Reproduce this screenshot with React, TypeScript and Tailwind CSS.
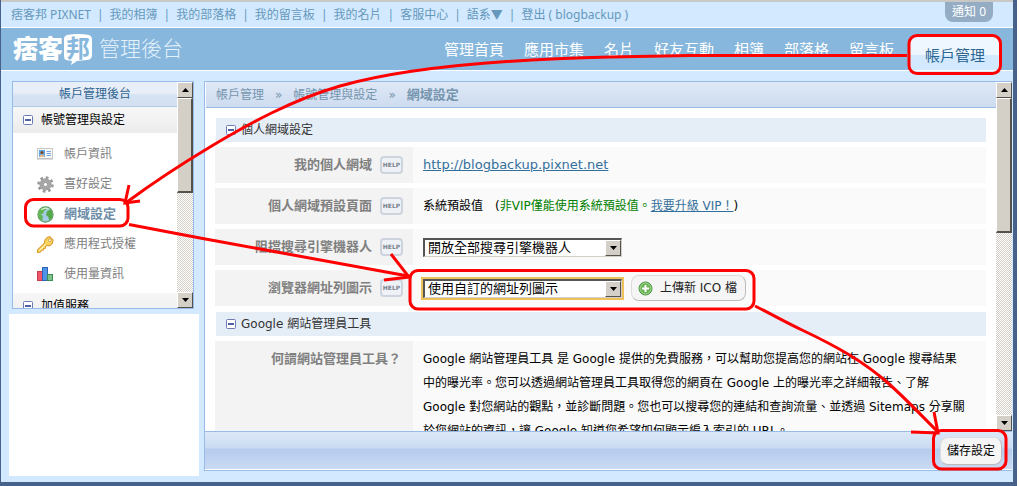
import type { ReactNode } from 'react';

const TOP_LINKS = ['痞客邦 PIXNET', '我的相簿', '我的部落格', '我的留言板', '我的名片', '客服中心', '語系▼', '登出 ( blogbackup )'];

const NAV_LINKS = ['管理首頁', '應用市集', '名片', '好友互動', '相簿', '部落格', '留言板'];

const CardIcon = () => (
  <svg width="16" height="16" viewBox="0 0 16 16" aria-hidden="true">
    <rect x="0.5" y="2.5" width="15" height="10" fill="#f7f7f7" stroke="#c9c9c9" />
    <rect x="2" y="4" width="6" height="7" fill="#5fa8ea" />
    <circle cx="5" cy="6.5" r="1.6" fill="#7c4b20" />
    <path d="M2.5 11a2.5 2.5 0 0 1 5 0z" fill="#e9b98a" />
    <path d="M9.5 5.5h4.5M9.5 7.5h4.5M9.5 9.5h4.5" stroke="#79a9dc" />
    <path d="M0 13h16" stroke="#b9b9b9" />
  </svg>
);

const GearIcon = () => (
  <svg width="17" height="17" viewBox="0 0 16 16" aria-hidden="true">
    <circle cx="8" cy="8" r="6.4" fill="none" stroke="#9a9a9a" strokeWidth="2.8" strokeDasharray="2.5 2.53" />
    <circle cx="8" cy="8" r="4.2" fill="#dcdcdc" stroke="#a4a4a4" strokeWidth="3.2" />
    <circle cx="8" cy="8" r="2" fill="#fff" stroke="#777" strokeWidth="0.8" />
  </svg>
);

const GlobeIcon = () => (
  <svg width="17" height="17" viewBox="0 0 16 16" aria-hidden="true">
    <circle cx="8" cy="8" r="7.2" fill="#a3cbe6" stroke="#5d9b62" />
    <path d="M2 4.5C4 1.5 7 .9 9.5 1.3L8.500 3.500 6.500 4.500 6 7 3.500 7.500 5.500 9.500 5 14C2 12.500.8 9 1.200 6.500z" fill="#62b551" />
    <path d="M10 4.500l3-1.500c2 2.500 2.300 6 .8 8.500l-2.300 2-1-3.500-2-1.500.5-2.500z" fill="#56a948" />
    <path d="M4 3.500C6 2 9 1.700 11 2.700" fill="none" stroke="#d9f2cf" />
  </svg>
);

const KeyIcon = () => (
  <svg width="17" height="17" viewBox="0 0 16 16" aria-hidden="true">
    <path
      d="M9.500 1.500l2.500-.9 3.200 3.200-.9 3.200-2.600 2.300-2.400-.5-1.300 1.200-.2 1.500-1.500.2-.3 1.500-1.700.3-1.500 1.800-2.200.1-.1-2.300L7 6.800l.4-2.800z"
      fill="#f9d75e"
      stroke="#dc9a2b"
    />
    <path d="M2 14l6-6" stroke="#fff3b8" />
    <circle cx="12" cy="4" r="1.300" fill="#fff" stroke="#c98724" strokeWidth="0.700" />
  </svg>
);

const ChartIcon = () => (
  <svg width="17" height="16" viewBox="0 0 17 16" aria-hidden="true">
    <rect x="0.5" y="5.500" width="5" height="9" fill="#f0566a" stroke="#c23a4e" />
    <rect x="5.500" y="1.500" width="5" height="13" fill="#4f93e6" stroke="#2c62b8" />
    <rect x="10.500" y="8.500" width="5" height="6" fill="#7cc489" stroke="#3d8d55" />
  </svg>
);

const MENU = [
  { label: '帳戶資訊', icon: <CardIcon /> },
  { label: '喜好設定', icon: <GearIcon /> },
  { label: '網域設定', icon: <GlobeIcon />, active: true },
  { label: '應用程式授權', icon: <KeyIcon /> },
  { label: '使用量資訊', icon: <ChartIcon /> },
];

const Toggle = () => (
  <svg width="10" height="10" viewBox="0 0 10 10" aria-hidden="true">
    <rect x="0.5" y="0.5" width="9" height="9" rx="1" fill="#fff" stroke="#6c7ab5" />
    <rect x="2" y="4" width="6" height="2" fill="#5161a5" />
  </svg>
);

const BEVEL = 'border border-t-[#fff] border-l-[#fff] border-r-[#55524d] border-b-[#55524d] bg-[#d4d0c8]';

function ArrowBox({ up = false }: { up?: boolean }) {
  return (
    <span className={`flex h-4 w-4 shrink-0 items-center justify-center ${BEVEL}`}>
      <svg width="7" height="4" viewBox="0 0 7 4" aria-hidden="true">
        <path d={up ? 'M3.500 0L7 4H0z' : 'M0 0h7L3.500 4z'} fill="#000" />
      </svg>
    </span>
  );
}

function Scrollbar({ thumb }: { thumb: string }) {
  return (
    <div
      aria-hidden="true"
      className="flex w-4 shrink-0 flex-col bg-[repeating-conic-gradient(#d4d0c8_0_25%,#ffffff_0_50%)] bg-[length:2px_2px]"
    >
      <ArrowBox up />
      <div className={`${thumb} border-r-2 border-b-2 ${BEVEL}`} />
      <div className="flex-1" />
      <ArrowBox />
    </div>
  );
}

function Select({ id, value, focused = false }: { id: string; value: string; focused?: boolean }) {
  return (
    <div
      className={`relative h-[19px] w-[199px] border border-t-2 border-l-2 border-[#d4d0c8] border-t-[#555] border-l-[#555] bg-white ${
        focused ? 'outline-2 outline-[#edc15c]' : ''
      }`}
    >
      <select id={id} className="block h-4 w-full appearance-none bg-white pr-4 pl-[3px] text-[13px] leading-4 text-black outline-none">
        <option>{value}</option>
      </select>
      <span className="pointer-events-none absolute top-0 right-0">
        <ArrowBox />
      </span>
    </div>
  );
}

function SectionTitle({ children }: { children: ReactNode }) {
  return (
    <h2 className="ml-px flex h-6 items-center gap-[5px] bg-[#e5edf7] pl-2.5 text-xs text-[#333]">
      <Toggle />
      {children}
    </h2>
  );
}

function HelpButton() {
  return (
    <button
      type="button"
      className="flex h-[18px] w-[23px] shrink-0 items-center justify-center rounded border-2 border-[#cdd4dd] bg-[#eef2f7] text-[6px] leading-none font-bold text-[#7b828c]"
    >
      HELP
    </button>
  );
}

function Row({ label, htmlFor, children }: { label: string; htmlFor?: string; children: ReactNode }) {
  return (
    <div className="flex h-9 text-xs">
      <div className="flex w-[198px] shrink-0 items-center justify-end gap-2 bg-[#f3f3f3] pr-2.5">
        <label htmlFor={htmlFor} className="text-[13px] font-bold text-[#808080]">
          {label}
        </label>
        <HelpButton />
      </div>
      <div className="flex flex-1 items-center bg-[#fafafa] pl-2.5 whitespace-nowrap text-black">{children}</div>
    </div>
  );
}

function Sidebar() {
  return (
    <aside className="flex w-[190px] shrink-0 flex-col gap-[5px]">
      <div className="mr-[5px] ml-[3px] flex h-[228px] shrink-0 overflow-hidden border border-[#99bbe8] bg-white">
        <div className="min-w-0 flex-1 text-xs">
          <h2 className="h-[25px] border-b border-[#a9cbe8] bg-[linear-gradient(#e9eff9_0_45%,#d5e3f3_55%,#d2e0f2)] text-center leading-6 text-[#2f6490]">
            帳戶管理後台
          </h2>
          <h3 className="flex h-[26px] items-center gap-2 bg-linear-to-b from-[#f7f7f7] to-[#ececec] pl-2.5 text-black">
            <Toggle />
            帳號管理與設定
          </h3>
          <ul className="pt-1.5 pb-1">
            {MENU.map((item) => (
              <li key={item.label}>
                <a href="#" className="flex h-[30px] items-center pl-6">
                  <span className="w-[27px]">{item.icon}</span>
                  <span className={item.active ? 'text-[13px] font-bold text-[#6f8fa8]' : 'text-[#808080]'}>{item.label}</span>
                </a>
              </li>
            ))}
          </ul>
          <h3 className="flex h-[26px] items-center gap-2 bg-linear-to-b from-[#f7f7f7] to-[#ececec] pl-2.5 text-black">
            <Toggle />
            加值服務
          </h3>
        </div>
        <Scrollbar thumb="h-[95px]" />
      </div>
      <div className="flex-1 bg-white" />
    </aside>
  );
}

function SettingsPanel() {
  return (
    <main className="mr-px mb-[5px] flex min-w-0 flex-1 flex-col border border-r-0 border-[#99bbe8] bg-white">
      <div className="flex min-h-0 flex-1">
        <div className="min-w-0 flex-1 overflow-hidden">
          <nav className="ml-px flex h-[26px] items-center gap-[11px] border-b border-[#99bbe8] bg-linear-to-b from-[#dfe8f6] to-[#cddcf0] pl-2.5 text-xs text-[#7595ae]">
            <a href="#">帳戶管理</a>
            <span>»</span>
            <a href="#">帳號管理與設定</a>
            <span>»</span>
            <strong className="text-[13px]">網域設定</strong>
          </nav>
          <form className="mr-2.5 ml-2.5 pt-2.5">
            <SectionTitle>個人網域設定</SectionTitle>
            <div className="mt-[5px] mb-1.5 flex flex-col gap-[5px]">
              <Row label="我的個人網域">
                <a href="#" className="text-[13px] text-[#336f9c] underline">
                  http://blogbackup.pixnet.net
                </a>
              </Row>
              <Row label="個人網域預設頁面">
                系統預設值
                <span className="ml-3">(</span>
                <span className="text-[#008000]">非VIP僅能使用系統預設值。</span>
                <a href="#" className="text-[#336f9c] underline">
                  我要升級 VIP！
                </a>
                )
              </Row>
              <Row label="阻擋搜尋引擎機器人" htmlFor="robots">
                <Select id="robots" value="開放全部搜尋引擎機器人" />
              </Row>
              <Row label="瀏覽器網址列圖示" htmlFor="favicon">
                <Select id="favicon" value="使用自訂的網址列圖示" focused />
                <button
                  type="button"
                  className="ml-[9px] flex h-[26px] items-center gap-[7px] rounded-lg border border-[#dcdcdc] border-r-[#bbb] border-b-[#bbb] bg-[#f5f5f5] pr-2 pl-1.5 text-xs text-[#222]"
                >
                  <svg width="15" height="15" viewBox="0 0 15 15" aria-hidden="true">
                    <circle cx="7.500" cy="7.500" r="6.500" fill="#6cb356" stroke="#4c9646" />
                    <circle cx="7.500" cy="7.500" r="5.400" fill="none" stroke="#a5d694" />
                    <path d="M7.500 4v7M4 7.500h7" stroke="#fff" strokeWidth="2" />
                  </svg>
                  上傳新 ICO 檔
                </button>
              </Row>
            </div>
            <SectionTitle>Google 網站管理員工具</SectionTitle>
            <div className="mt-[5px] flex text-xs leading-6">
              <div className="w-[198px] shrink-0 bg-[#f3f3f3] pt-1.5 pr-3 text-right text-[13px] font-bold text-[#808080]">
                何謂網站管理員工具？
              </div>
              <p className="flex-1 bg-[#fafafa] pt-1.5 pb-3 pl-2.5 whitespace-nowrap text-black">
                Google 網站管理員工具 是 Google 提供的免費服務，可以幫助您提高您的網站在 Google 搜尋結果
                <br />
                中的曝光率。您可以透過網站管理員工具取得您的網頁在 Google 上的曝光率之詳細報告、了解
                <br />
                Google 對您網站的觀點，並診斷問題。您也可以搜尋您的連結和查詢流量、並透過 Sitemaps 分享關
                <br />
                於您網站的資訊，讓 Google 知道您希望如何顯示編入索引的 URL。
              </p>
            </div>
          </form>
        </div>
        <Scrollbar thumb="h-[135px]" />
      </div>
      <div className="flex h-[39px] shrink-0 items-center justify-end border-t border-b border-t-[#99bbe8] border-b-white bg-[linear-gradient(#dce8f7,#cadbf2_16px,#b5ccee_17px,#cbdaf3)] pr-2.5">
        <button
          type="button"
          className="h-7 rounded-lg border border-[#dcdcdc] border-r-[#bbb] border-b-[#bbb] bg-[#f5f5f5] px-1.5 text-xs text-black"
        >
          儲存設定
        </button>
      </div>
    </main>
  );
}

// Hand-drawn walkthrough marks laid over the window
function Annotations() {
  return (
    <svg
      className="pointer-events-none absolute top-0 left-0"
      width="1020"
      height="486"
      viewBox="0 0 1020 486"
      fill="none"
      stroke="#f00"
      strokeWidth="3"
      aria-hidden="true"
    >
      <rect x="909" y="35.500" width="91.500" height="38" rx="8" />
      <path d="M907 55.500H690L610 57C520 59 410 66 340 86C292 100 250 123 210 147C180 165 150 185 127 202" />
      <path d="M129 185L125 203L140 201" />
      <rect x="25.500" y="199.500" width="102.500" height="26.500" rx="8" />
      <path d="M129 224.500L200 238L408 276" />
      <path d="M391 254L409 277L384 280" />
      <rect x="410" y="270.500" width="344" height="38.500" rx="8" />
      <path d="M755 306C775 316 785 322 802 330C838 347 864 362 888 383C906 399 918 412 938 432" />
      <path d="M934 412L938 433L911 432" />
      <rect x="933.500" y="430.500" width="72.500" height="38.500" rx="8" />
    </svg>
  );
}

export default function App() {
  return (
    <div className="relative h-screen overflow-hidden bg-white pr-[3px] [font-family:'DejaVu_Sans','Noto_Sans_CJK_TC',sans-serif]">
      <div className="flex h-full flex-col border-r-4 border-b-4 border-l border-[#46618a] bg-[#d2e9ff]">
        <div className="flex h-[27px] shrink-0 items-start border-t-2 border-[#c9c8c4] pr-5 pl-2.5 text-xs [font-family:'Noto_Sans','Noto_Sans_CJK_TC',sans-serif]">
          <ul className="flex h-[25px] flex-1 items-center gap-1.5 whitespace-nowrap text-[#6598bb]">
            {TOP_LINKS.map((label, i) => (
              <li key={label} className="flex gap-1.5">
                {i > 0 && <span>|</span>}
                <a href="#">{label}</a>
              </li>
            ))}
          </ul>
          <a href="#" className="h-5 rounded-b-lg bg-[#94adc5] px-[7px] leading-5 text-white">
            通知 0
          </a>
        </div>

        <header className="flex h-11 shrink-0 border-t border-b border-white bg-[#87b7dc] pr-3 pl-3">
          <h1 className="flex items-center text-white">
            <span className="text-[25px] leading-none font-black">痞客</span>
            <span className="relative flex h-8 w-[30px] items-center justify-center">
              <svg className="absolute inset-0" width="30" height="32" viewBox="0 0 30 32" aria-hidden="true">
                <path d="M4 2Q15 0 26 2Q29 3 29 7V23Q28 27 24 27L14 28L8 32L9 28L3 27Q1 26 1 23V6Q1 3 4 2z" fill="#fff" />
              </svg>
              <span className="relative text-[24px] leading-none font-bold text-[#87b7dc]">邦</span>
            </span>
            <span className="ml-1.5 text-[21px] leading-none font-light text-[#e3f1fb]">管理後台</span>
          </h1>
          <nav className="flex flex-1 items-start justify-end gap-5 text-[15px] whitespace-nowrap text-white">
            {NAV_LINKS.map((label) => (
              <a key={label} href="#" className="mt-2.5 leading-6">
                {label}
              </a>
            ))}
            <a
              href="#"
              className="-ml-[5px] mt-2 h-[34px] rounded-t-lg bg-[linear-gradient(#eef7ff_0_55%,#d2e9ff_55%)] px-4 leading-10 text-[#2b6590]"
            >
              帳戶管理
            </a>
          </nav>
        </header>

        <div className="flex min-h-0 flex-1 pt-2.5 pb-1.5 pl-2">
          <Sidebar />
          <div className="w-[5px] shrink-0" />
          <SettingsPanel />
        </div>
      </div>
      <Annotations />
    </div>
  );
}
